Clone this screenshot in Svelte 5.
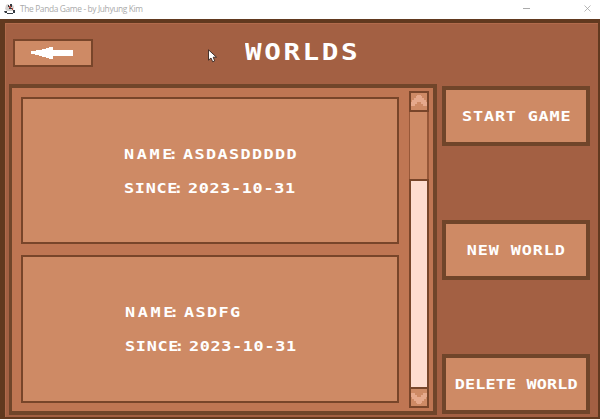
<script>
  const worlds = [
    { name: 'ASDASDDDDD', since: '2023-10-31' },
    { name: 'ASDFG', since: '2023-10-31' }
  ];
  const actions = ['START GAME', 'NEW WORLD', 'DELETE WORLD'];
</script>

{#snippet chevron(down)}
  <svg class:down width="16" height="17" viewBox="0 0 16 17" shape-rendering="crispEdges">
    <path d="M6 2h4v1h1v2h2v2h2v2h1v4h-4v-2h-2V9H6v2H4v2H0V9h1V7h2V5h2V3h1z" fill="#e6a98c" />
  </svg>
{/snippet}

<div class="window">
  <header class="titlebar">
    <svg width="12" height="12" viewBox="0 0 12 12">
      <path d="M2 2l2-1 2 2 3-1 1 2-1 4H3L1 6z" fill="#d5d1ce" />
      <path d="M4 2h1v2H4zM6 1h2v3H6zM5 5h3v1H5zM0 8h3v2H1zM9 7h2v3H9zM3 10h6v1H3z" fill="#353a40" />
      <path d="M5 3h2v2H5zM8 5h1v2H8z" fill="#b64a3f" />
    </svg>
    <span class="caption">The Panda Game - by Juhyung Kim</span>
    <svg class="min" width="7" height="7" viewBox="0 0 7 7"><path d="M0 3.5h7" stroke="#aaa" /></svg>
    <svg width="7" height="7" viewBox="0 0 7 7"><path d="M.5.5l6 6m0-6l-6 6" stroke="#999" stroke-width=".7" /></svg>
  </header>

  <main>
    <div class="top">
      <button class="back" aria-label="Back">
        <svg width="43" height="12" viewBox="0 0 43 12" shape-rendering="crispEdges">
          <path d="M0 4h5V3h6V2h4V1h3V0h4v3h20v6H22v3h-4v-1h-3v-1h-4V9H8V8H4V7H0z" fill="#fff" />
        </svg>
      </button>
      <h1>WORLDS</h1>
    </div>

    <div class="content">
      <section class="panel">
        <div class="list">
          {#each worlds as w}
            <article>
              <div class="info">
                <p><span class="key name">NAM<i>E</i>:</span> <span class="val">{w.name}</span></p>
                <p><span class="key since">SINC<i>E</i>:</span> <span class="val date">{w.since}</span></p>
              </div>
            </article>
          {/each}
        </div>
        <div class="scroll">
          <div class="cap">{@render chevron(false)}</div>
          <div class="track"></div>
          <div class="thumb"></div>
          <div class="cap">{@render chevron(true)}</div>
        </div>
      </section>
      <nav>
        {#each actions as label}
          <button class="action"><span>{label}</span></button>
        {/each}
      </nav>
    </div>
  </main>

  <svg class="cursor" width="11" height="14" viewBox="0 0 11 14">
    <path d="M1.5.8v10.4L4 9l1.7 3.8 2-.9L6.2 8.2h3.3z" fill="#fff" stroke="#35251f" stroke-width=".9" />
  </svg>
</div>

<style>
  * { box-sizing: border-box; }
  :global(body) { margin: 0; overflow: hidden; }
  .window {
    position: relative;
    width: 600px;
    height: 419px;
    display: flex;
    flex-direction: column;
    background: #fff;
    color: #fff;
    font-family: "DejaVu Sans Mono", monospace;
    font-weight: 700;
  }
  svg { display: block; flex: none; }
  .titlebar {
    height: 19px;
    padding: 0 9px 2px 4px;
    display: flex;
    align-items: center;
    color: #aaa;
    font: 8.4px "Open Sans", sans-serif;
    letter-spacing: -.36px;
  }
  .caption { flex: 1; margin-left: 4px; white-space: nowrap; }
  .min { margin-right: 54px; }
  main {
    flex: 1;
    display: flex;
    flex-direction: column;
    border: solid #61391f;
    border-width: 4px 2px 2px 5px;
    background: #a36043;
    box-shadow: inset 1px 1px #b16b4c;
  }
  .top { height: 61px; flex: none; display: flex; align-items: flex-start; padding: 16px 0 0 8px; }
  button {
    margin: 0;
    padding: 0;
    display: flex;
    align-items: center;
    justify-content: center;
    background: #ce8a65;
    color: #fff;
    font: inherit;
    border-radius: 0;
  }
  .back { width: 80px; height: 28px; border: 2px solid #78452a; padding-right: 1px; }
  /* wide pixel-style lettering */
  h1, p { transform: scaleX(1.2); transform-origin: left; }
  h1 { margin: 0 0 0 152px; padding-top: 2px; font-size: 23px; line-height: 23px; letter-spacing: 2.15px; }
  .content { display: flex; padding-left: 4px; gap: 5px; }
  .panel {
    width: 428px;
    height: 331px;
    border: solid #70452a;
    border-width: 4px 4px 4px 3px;
    background: #bf7653;
    display: flex;
    justify-content: space-between;
    padding: 3px 4px 3px 9px;
  }
  .list { display: flex; flex-direction: column; gap: 11px; padding-top: 6px; }
  article {
    width: 378px;
    height: 147px;
    border: 2px solid #78452a;
    background: #ce8a65;
    display: flex;
    align-items: center;
  }
  article:nth-child(2) { height: 148px; }
  .info { margin-left: 101px; }
  article:nth-child(2) .info { margin-left: 102px; }
  p { margin: 0; display: flex; font-size: 14px; line-height: 34px; }
  .key { letter-spacing: 2.2px; width: 49.2px; white-space: nowrap; }
  .since { width: 53.3px; letter-spacing: .6px; }
  .key i { font-style: normal; letter-spacing: -3.6px; }
  .val { letter-spacing: 1.15px; }
  .date { letter-spacing: .55px; }
  .scroll { width: 20px; display: flex; flex-direction: column; }
  .cap {
    height: 21px;
    border: 2px solid #78452a;
    background: #ce8a65;
    display: flex;
    align-items: center;
    justify-content: center;
  }
  .down { transform: rotate(180deg); }
  .track { height: 67px; background: #ce8a65; border: solid #965738; border-width: 0 2px 0 1px; }
  .thumb { height: 208px; background: #ffdccf; border: solid #78452a; border-width: 2px 2px 0; }
  nav { display: flex; flex-direction: column; justify-content: space-between; padding-top: 2px; height: 330px; }
  .action { width: 148px; height: 60px; border: 4px solid #70452a; font-size: 14px; letter-spacing: .68px; }
  .action span { padding-left: 1px; white-space: nowrap; transform: scaleX(1.2); }
  .action:first-child span { padding-left: 2px; }
  .action:nth-child(2) { letter-spacing: .74px; }
  .action:nth-child(3) { letter-spacing: .1px; }
  .cursor { position: absolute; left: 207px; top: 49px; }
</style>
